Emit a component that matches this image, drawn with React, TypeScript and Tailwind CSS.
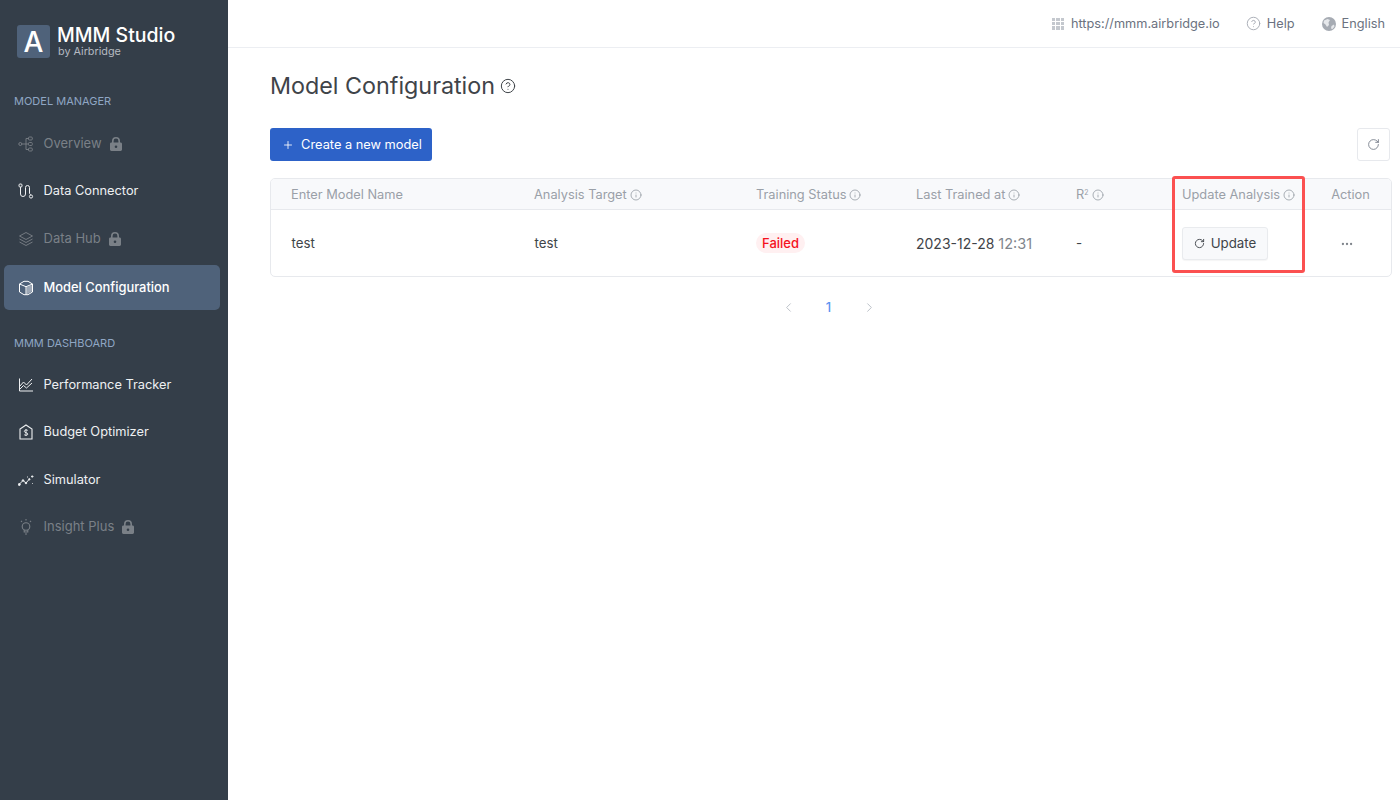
import { Info, Plus, RotateCw, ChevronLeft, ChevronRight, MoreHorizontal, CircleHelp } from "lucide-react";
import type { ReactNode } from "react";

function LockIcon() {
  return (
    <svg viewBox="0 0 12 14" className="h-[14px] w-[12px]" fill="currentColor">
      <path d="M2 5.500V4a4 4 0 0 1 8 0v1.500h.6c.8 0 1.400.6 1.400 1.400v5.700c0 .8-.6 1.400-1.400 1.400H1.400C.6 14 0 13.400 0 12.600V6.900c0-.8.6-1.400 1.400-1.400H2zm1.600 0h4.800V4a2.400 2.400 0 0 0-4.800 0v1.500z" />
      <circle cx="6" cy="9.700" r="1.300" fill="#343e49" />
    </svg>
  );
}

function OverviewIcon() {
  return (
    <svg viewBox="0 0 16 16" className="h-4 w-4" fill="none" stroke="currentColor" strokeWidth="0.900">
      <circle cx="2.300" cy="8" r="1.500" />
      <rect x="10.500" y="1" width="3.800" height="3" rx="1" />
      <rect x="10.500" y="6.500" width="3.800" height="3" rx="1" />
      <rect x="10.500" y="12" width="3.800" height="3" rx="1" />
      <path d="M3.800 8h6.700M8 2.500h2.500M8 13.500h2.500M8 2.500v11" />
    </svg>
  );
}

function ConnectorIcon() {
  return (
    <svg viewBox="0 0 16 16" className="h-4 w-4" fill="none" stroke="currentColor" strokeWidth="1">
      <rect x="1" y="1" width="3" height="3" rx="1" />
      <circle cx="13" cy="13.500" r="1.600" />
      <path d="M2.500 4v7a2.500 2.500 0 0 0 5 0V4.500a2 2 0 0 1 4 0V10c0 1 .6 1.500 1.500 2" />
    </svg>
  );
}

function LayersIcon() {
  return (
    <svg viewBox="0 0 16 16" className="h-4 w-4" fill="none" stroke="currentColor" strokeWidth="0.900">
      <path d="M8 1.500 14.500 5 8 8.500 1.500 5z" />
      <path d="M1.500 8 8 11.500 14.500 8" />
      <path d="M1.500 11 8 14.500 14.500 11" />
    </svg>
  );
}

function CubeIcon() {
  return (
    <svg viewBox="0 0 16 16" className="h-4 w-4" fill="none" stroke="currentColor" strokeWidth="1">
      <path d="M6 1.300h4l4.500 2.700v8L10 14.700H6L1.500 12V4z" />
      <path d="M1.500 4 8 6.700 14.500 4M8 6.700v8" />
      <path d="M8.500 7 14 5v6.500l-5.500 3z" fill="currentColor" fillOpacity="0.45" stroke="none" />
    </svg>
  );
}

function ChartIcon() {
  return (
    <svg viewBox="0 0 16 16" className="h-4 w-4" fill="none" stroke="currentColor" strokeWidth="1">
      <path d="M1.500 1.500v12.500h13.500" />
      <path d="M1.500 9.500 5.500 5l3 3 5.500-6" />
      <path d="M1.500 12.500 5.500 8.500l3 2.500 5.500-5" />
    </svg>
  );
}

function BudgetIcon() {
  return (
    <svg viewBox="0 0 16 16" className="h-4 w-4" fill="none" stroke="currentColor" strokeWidth="1.100">
      <path d="M8 1 14 5v10H2V5z" />
      <path d="M9.800 6.500C9.400 5.800 6.300 5.600 6.300 7.300c0 1.800 3.500 1 3.500 2.800 0 1.600-3 1.400-3.600.6M8 5v7" strokeWidth="0.900" />
    </svg>
  );
}

function SimulatorIcon() {
  return (
    <svg viewBox="0 0 16 16" className="h-4 w-4" fill="currentColor" stroke="currentColor" strokeWidth="1">
      <path d="M1 12.500 5 8.500l3 2.500 3-3.500" fill="none" />
      <circle cx="1.300" cy="12.500" r="1" />
      <circle cx="5" cy="8.500" r="0.800" />
      <circle cx="8" cy="11" r="0.800" />
      <circle cx="11.300" cy="7.300" r="0.700" />
      <path d="M13 4.500h2.500M14.200 3.300v2.500M9 5h1M14.500 11v.8" fill="none" strokeWidth="0.900" />
    </svg>
  );
}

function BulbIcon() {
  return (
    <svg viewBox="0 0 16 18" className="h-[18px] w-4" fill="none" stroke="currentColor" strokeWidth="1.100">
      <circle cx="8" cy="8.500" r="3.800" />
      <path d="M6.200 12v2h3.600v-2M7 16h2M8 1v1.500M3 2.800l1 1.200M13 2.800l-1 1.200" />
    </svg>
  );
}

function GridDotsIcon() {
  const dots = [0, 1, 2, 3, 4, 5, 6, 7, 8];
  return (
    <span className="grid h-3 w-3 grid-cols-3 gap-px">
      {dots.map((d) => (
        <span key={d} className="bg-[#c4c8ce]" />
      ))}
    </span>
  );
}

function GlobeIcon() {
  return (
    <svg viewBox="0 0 14 14" className="h-[14px] w-[14px]">
      <circle cx="7" cy="7" r="7" fill="#a6abb3" />
      <path d="M2 3.500 5.500 2 8 3 6.500 5.500 7 8 5 10 3.500 7.500 1.500 6zM9.500 9l2.500-1.500.5 2-2 2.500-1.500-.5z" fill="#e6e8eb" />
    </svg>
  );
}

interface NavItemProps {
  icon: ReactNode;
  label: string;
  locked?: boolean;
  active?: boolean;
}

function NavItem({ icon, label, locked, active }: NavItemProps) {
  return (
    <div
      className={`flex h-[45px] items-center gap-[10px] rounded-[5px] pl-[13.500px] ${
        active
          ? "mt-[1.500px] bg-[#4f627a] text-[12.900px] font-medium text-white"
          : locked
            ? "text-[13px] text-[#7a8087]"
            : "text-[12.800px] text-[#eef0f2]"
      }`}
    >
      <span className="flex w-[16px] justify-center">{icon}</span>
      <span>{label}</span>
      {locked && (
        <span className="ml-[-2px] text-[#7a8087]">
          <LockIcon />
        </span>
      )}
    </div>
  );
}

function Sidebar() {
  return (
    <aside className="flex h-[800px] w-[228px] shrink-0 flex-col bg-[#343e49] pl-[4px] pr-[8px]">
      <div className="ml-[13px] mt-[25px] flex items-center gap-[7px]">
        <div className="flex h-[33px] w-[33px] items-center justify-center rounded-[3px] bg-[#4f627a] text-[28px] font-medium leading-none text-white">
          A
        </div>
        <div className="flex flex-col">
          <span className="text-[19.500px] font-medium leading-[20px] text-white">MMM Studio</span>
          <span className="ml-[1px] text-[10.800px] leading-[13px] text-[#b4bac1]">by Airbridge</span>
        </div>
      </div>
      <p className="ml-[10px] mt-[36px] text-[11px] font-normal leading-[14px] text-[#8fa6c4]">MODEL MANAGER</p>
      <div className="mt-[13px] flex flex-col gap-[2.500px]">
        <NavItem icon={<OverviewIcon />} label="Overview" locked />
        <NavItem icon={<ConnectorIcon />} label="Data Connector" />
        <NavItem icon={<LayersIcon />} label="Data Hub" locked />
        <NavItem icon={<CubeIcon />} label="Model Configuration" active />
      </div>
      <p className="ml-[10px] mt-[26px] text-[11px] font-normal leading-[14px] text-[#8fa6c4]">MMM DASHBOARD</p>
      <div className="mt-[12px] flex flex-col gap-[2.500px]">
        <NavItem icon={<ChartIcon />} label="Performance Tracker" />
        <NavItem icon={<BudgetIcon />} label="Budget Optimizer" />
        <NavItem icon={<SimulatorIcon />} label="Simulator" />
        <NavItem icon={<BulbIcon />} label="Insight Plus" locked />
      </div>
    </aside>
  );
}

function TopBar() {
  return (
    <header className="flex h-[48px] items-center justify-end border-b border-[#eceef2] pr-[15px] text-[12.750px] text-[#6b7280]">
      <GridDotsIcon />
      <span className="ml-[7px]">https://mmm.airbridge.io</span>
      <CircleHelp className="ml-[26px] h-[15px] w-[15px] text-[#a6abb3]" strokeWidth={1.500} />
      <span className="ml-[6px]">Help</span>
      <span className="ml-[27px]">
        <GlobeIcon />
      </span>
      <span className="ml-[6px]">English</span>
    </header>
  );
}

function HeaderCell({ children, info = true }: { children: ReactNode; info?: boolean }) {
  return (
    <div className="flex items-center gap-[3px] pl-[20px]">
      <span>{children}</span>
      {info && <Info className="h-[12px] w-[12px]" strokeWidth={1.700} />}
    </div>
  );
}

const columns = "grid grid-cols-[243px_222px_160px_160px_106px_148px_81px]";

function ConfigTable() {
  return (
    <div className="mr-[8px] mt-[17px] overflow-hidden rounded-[5px] border border-[#e7e9ed] text-[12.800px]">
      <div className={`${columns} h-[31px] items-center border-b border-[#e7e9ed] bg-[#f8f9fb] pt-[1px] text-[#9aa0a8]`}>
        <HeaderCell info={false}>Enter Model Name</HeaderCell>
        <HeaderCell>Analysis Target</HeaderCell>
        <HeaderCell>Training Status</HeaderCell>
        <HeaderCell>Last Trained at</HeaderCell>
        <HeaderCell>
          R<sup className="text-[7px]">2</sup>
        </HeaderCell>
        <HeaderCell>Update Analysis</HeaderCell>
        <div className="text-center">Action</div>
      </div>
      <div className={`${columns} h-[66px] items-center pt-[1px] text-[13.300px] text-[#3f4449]`}>
        <div className="pl-[20.500px]">test</div>
        <div className="pl-[20.500px]">test</div>
        <div className="pl-[20px]">
          <span className="inline-flex h-[20px] items-center rounded-full bg-[#fff0f1] px-[6px] text-[13px] font-medium text-[#f5121d]">
            Failed
          </span>
        </div>
        <div className="pl-[20px] text-[14px]">
          2023-12-28 <span className="text-[14.500px] text-[#80858c]">12:31</span>
        </div>
        <div className="pl-[20px]">-</div>
        <div className="pl-[20px]">
          <button className="flex h-[33px] w-[86px] items-center justify-center gap-[6px] rounded-[3px] border border-[#e9ebee] bg-[#f8f9fb] text-[#3f4449] shadow-[0_1px_1px_rgba(0,0,0,0.04)]">
            <RotateCw className="h-[11px] w-[11px]" strokeWidth={2} />
            Update
          </button>
        </div>
        <div className="flex justify-center pr-[7px] text-[#80858c]">
          <MoreHorizontal className="h-[14px] w-[14px]" strokeWidth={2} />
        </div>
      </div>
    </div>
  );
}

export default function App() {
  return (
    <div className="relative flex h-[800px] w-[1400px] overflow-hidden bg-white font-['Inter',sans-serif]">
      <Sidebar />
      <main className="min-w-0 flex-1">
        <TopBar />
        <div className="pl-[42px]">
          <div className="mt-[21px] flex h-[34px] items-center gap-[5px]">
            <h1 className="text-[23.300px] font-normal text-[#3f4449]">Model Configuration</h1>
            <CircleHelp className="h-[16px] w-[16px] text-[#3f4449]" strokeWidth={1.500} />
          </div>
          <div className="mt-[25px] flex items-center justify-between pr-[10px]">
            <button className="flex h-[33px] w-[162px] items-center justify-center gap-[7px] rounded-[3px] bg-[#2d62c8] pl-[2px] text-[12.800px] text-white">
              <Plus className="h-[12px] w-[12px]" strokeWidth={1.700} />
              Create a new model
            </button>
            <button className="flex h-[33px] w-[33px] items-center justify-center rounded-[3px] border border-[#e7e9ed] text-[#6b7280]">
              <RotateCw className="h-[13px] w-[13px]" strokeWidth={1.500} />
            </button>
          </div>
          <ConfigTable />
          <div className="mt-[21px] flex items-center justify-center gap-[30px] pr-[12px] text-[13px]">
            <ChevronLeft className="h-[15px] w-[15px] text-[#b8bdc4]" strokeWidth={1.500} />
            <span className="font-medium text-[#5b93f0]">1</span>
            <ChevronRight className="ml-[1px] h-[15px] w-[15px] text-[#b8bdc4]" strokeWidth={1.500} />
          </div>
        </div>
      </main>
      <div className="absolute left-[1172px] top-[176px] h-[97px] w-[133px] rounded-[3px] border-[3px] border-[#fb5050]" />
    </div>
  );
}
